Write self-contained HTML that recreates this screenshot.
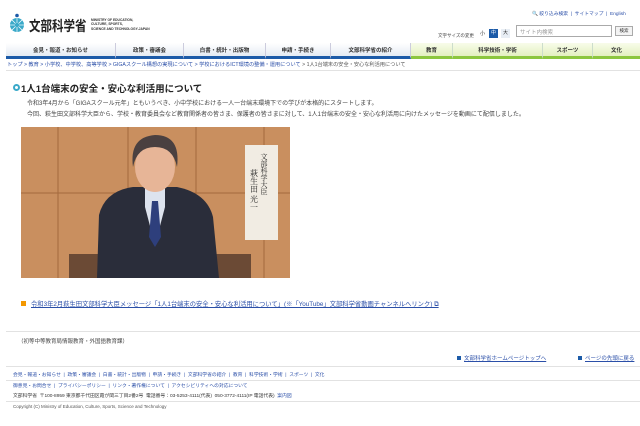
<!DOCTYPE html>
<html><head><meta charset="utf-8"><style>
*{margin:0;padding:0;box-sizing:border-box}
body{width:640px;height:426px;background:#fff;font-family:"Liberation Sans","Noto Sans CJK JP",sans-serif;color:#333;position:relative;overflow:hidden}
.a{position:absolute;white-space:nowrap}
.nav{position:absolute;top:43px;left:6px;width:634px;height:16px;display:flex;font-size:5.5px;font-weight:bold}
.nav div{display:flex;align-items:center;justify-content:center;height:100%}
.b{background:linear-gradient(#fff,#e4ebf3);border-bottom:3px solid #1c5ba8;border-right:1px solid #ccd}
.g{background:linear-gradient(#f8fcea,#e3f0c0);border-bottom:3px solid #8cc63f;border-right:1px solid #cdc}
.s{font-size:5px;color:#444}
.l{color:#2b4fa8;text-decoration:underline}
hr{position:absolute;border:0;border-top:1px solid #e2e2e2}
</style></head><body>
<svg class="a" style="left:8px;top:13px" width="18" height="20" viewBox="0 0 18 20"><circle cx="9" cy="2.5" r="1.8" fill="#1b5aa8"/><circle cx="9" cy="12" r="7" fill="#3aa9c9"/><g stroke="#fff" stroke-width=".7"><line x1="2" y1="12" x2="16" y2="12"/><line x1="9" y1="5" x2="9" y2="19"/><line x1="4" y1="7" x2="14" y2="17"/><line x1="14" y1="7" x2="4" y2="17"/></g><circle cx="9" cy="12" r="2" fill="#3aa9c9"/></svg>
<div class="a" style="left:29px;top:16px;font-size:11.5px;color:#222;font-weight:bold;transform:scaleY(1.25);transform-origin:top left">文部科学省</div>
<div class="a" style="left:91px;top:18px;font-size:3.3px;line-height:4.3px;color:#333;font-weight:bold">MINISTRY OF EDUCATION,<br>CULTURE, SPORTS,<br>SCIENCE AND TECHNOLOGY-JAPAN</div>
<div class="a s" style="left:532px;top:10px;font-size:4.8px;color:#2b4fa8">🔍 絞り込み検索 &nbsp;|&nbsp; サイトマップ &nbsp;|&nbsp; English</div>
<div class="a s" style="left:438px;top:33px;font-size:4.5px">文字サイズの変更</div>
<div class="a" style="left:480px;top:30px;font-size:5px">小</div>
<div class="a" style="left:489px;top:29px;width:9px;height:9px;background:#1c5ba8;color:#fff;font-size:5px;text-align:center;line-height:9px">中</div>
<div class="a" style="left:501px;top:29px;width:9px;height:9px;background:#e8eef5;font-size:5px;text-align:center;line-height:9px">大</div>
<div class="a" style="left:516px;top:25px;width:96px;height:12px;border:1px solid #aaa;font-size:5.5px;color:#999;padding:2px 3px">サイト内検索</div>
<div class="a" style="left:615px;top:26px;width:18px;height:10px;border:1px solid #aaa;background:#f3f3f3;font-size:4.5px;text-align:center;line-height:8px">検索</div>
<div class="nav">
<div class="b" style="width:110px">会見・報道・お知らせ</div>
<div class="b" style="width:68px">政策・審議会</div>
<div class="b" style="width:82px">白書・統計・出版物</div>
<div class="b" style="width:65px">申請・手続き</div>
<div class="b" style="width:80px">文部科学省の紹介</div>
<div class="g" style="width:42px">教育</div>
<div class="g" style="width:90px">科学技術・学術</div>
<div class="g" style="width:50px">スポーツ</div>
<div class="g" style="width:47px;border-right:0">文化</div>
</div>
<div class="a" style="left:7px;top:61px;font-size:5.2px;color:#555"><span style="color:#2b4fa8">トップ &gt; 教育 &gt; 小学校、中学校、高等学校 &gt; GIGAスクール構想の実現について &gt; 学校におけるICT環境の整備・運用について</span> &gt; 1人1台端末の安全・安心な利活用について</div>
<hr style="left:6px;top:70px;width:634px">
<div class="a" style="left:13px;top:84px;width:7px;height:7px;border-radius:50%;border:2px solid #3aa9c9"></div>
<div class="a" style="left:21px;top:81px;font-size:9.5px;font-weight:bold;color:#222">1人1台端末の安全・安心な利活用について</div>
<div class="a s" style="left:27px;top:99px;line-height:10.5px;font-size:6px">令和3年4月から「GIGAスクール元年」ともいうべき、小中学校における一人一台端末環境下での学びが本格的にスタートします。<br>今回、萩生田文部科学大臣から、学校・教育委員会など教育関係者の皆さま、保護者の皆さまに対して、1人1台端末の安全・安心な利活用に向けたメッセージを動画にて配信しました。</div>
<svg class="a" style="left:21px;top:127px" width="269" height="151" viewBox="0 0 269 151">
<rect width="269" height="151" fill="#c98f5f"/>
<g stroke="#a46a3e" stroke-width="1"><line x1="37" y1="0" x2="37" y2="151"/><line x1="107" y1="0" x2="107" y2="151"/><line x1="175" y1="0" x2="175" y2="151"/><line x1="243" y1="0" x2="243" y2="151"/><line x1="0" y1="66" x2="269" y2="66"/></g>
<rect x="48" y="127" width="182" height="24" fill="#6b4a35"/>
<path d="M76 151 L78 88 Q84 64 112 60 L156 60 Q186 66 192 90 L198 151Z" fill="#2a2d3a"/>
<path d="M124 60 L144 60 L144 80 L134 118 L124 80Z" fill="#dde3ee"/>
<path d="M131 74 L137 74 L140 110 L134 120 L128 110Z" fill="#2e3f7c"/>
<ellipse cx="134" cy="40" rx="20" ry="25" fill="#e7b597"/>
<path d="M112 40 Q108 10 134 8 Q160 8 156 40 Q152 20 134 20 Q116 20 112 40Z" fill="#4a4040"/>
<rect x="224" y="18" width="33" height="95" fill="#f1ece3"/>
<text x="243" y="26" font-size="7" fill="#222" font-family="Noto Serif CJK SC,serif" writing-mode="tb">文部科学大臣</text>
<text x="233" y="42" font-size="8" fill="#222" font-family="Noto Serif CJK SC,serif" writing-mode="tb">萩生田 光一</text>
</svg>
<div class="a" style="left:21px;top:301px;width:5px;height:5px;background:#f39800"></div>
<div class="a l" style="left:31px;top:299px;font-size:6.3px">令和3年2月萩生田文部科学大臣メッセージ「1人1台端末の安全・安心な利活用について」(※「YouTube」文部科学省動画チャンネルへリンク) ⧉</div>
<hr style="left:6px;top:331px;width:634px">
<div class="a s" style="left:18px;top:337px;font-size:5.5px">（初等中等教育局情報教育・外国語教育課）</div>
<div class="a" style="left:457px;top:356px;width:4px;height:4px;background:#1c5ba8"></div>
<div class="a l" style="left:464px;top:354px;font-size:5.5px">文部科学省ホームページトップへ</div>
<div class="a" style="left:578px;top:356px;width:4px;height:4px;background:#1c5ba8"></div>
<div class="a l" style="left:585px;top:354px;font-size:5.5px">ページの先頭に戻る</div>
<hr style="left:6px;top:366px;width:634px">
<div class="a" style="left:13px;top:371px;font-size:4.8px;color:#2b4fa8">会見・報道・お知らせ &nbsp;|&nbsp; 政策・審議会 &nbsp;|&nbsp; 白書・統計・出版物 &nbsp;|&nbsp; 申請・手続き &nbsp;|&nbsp; 文部科学省の紹介 &nbsp;|&nbsp; 教育 &nbsp;|&nbsp; 科学技術・学術 &nbsp;|&nbsp; スポーツ &nbsp;|&nbsp; 文化</div>
<hr style="left:6px;top:380px;width:634px">
<div class="a" style="left:13px;top:382px;font-size:4.8px;color:#2b4fa8">御意見・お問合せ &nbsp;|&nbsp; プライバシーポリシー &nbsp;|&nbsp; リンク・著作権について &nbsp;|&nbsp; アクセシビリティへの対応について</div>
<div class="a" style="left:13px;top:392px;font-size:4.8px;color:#333">文部科学省 &nbsp;〒100-8959 東京都千代田区霞が関三丁目2番2号 &nbsp;電話番号：03-5253-4111(代表) &nbsp;050-3772-4111(IP 電話代表) &nbsp;<span style="color:#2b4fa8">案内図</span></div>
<hr style="left:6px;top:401px;width:634px">
<div class="a" style="left:13px;top:404px;font-size:4.5px;color:#555">Copyright (C) Ministry of Education, Culture, Sports, Science and Technology</div>
</body></html>
